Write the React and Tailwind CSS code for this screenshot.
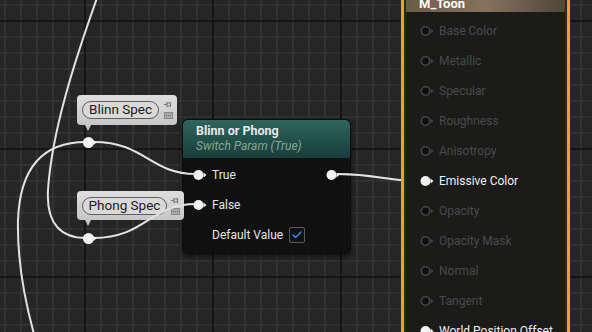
import { Check } from "lucide-react";

const matInputs = [
  { label: "Base Color" },
  { label: "Metallic" },
  { label: "Specular" },
  { label: "Roughness" },
  { label: "Anisotropy" },
  { label: "Emissive Color", active: true },
  { label: "Opacity" },
  { label: "Opacity Mask" },
  { label: "Normal" },
  { label: "Tangent" },
  { label: "World Position Offset", active: true },
];

function Pin({ active = true }) {
  return (
    <svg width="14" height="12" viewBox="0 0 14 12" className="shrink-0">
      {active ? (
        <>
          <circle cx="5.5" cy="6" r="5" fill="#f2f2f2" />
          <polygon points="10.5,3.5 13.5,6 10.5,8.5" fill="#f2f2f2" />
        </>
      ) : (
        <>
          <circle cx="5.5" cy="6" r="4.2" fill="#0e0e0e" stroke="#464646" strokeWidth="1.6" />
          <polygon points="10.8,3.8 13.5,6 10.8,8.2" fill="#464646" />
        </>
      )}
    </svg>
  );
}

function Grid() {
  return (
    <svg className="absolute inset-0" width="592" height="332">
      <defs>
        <pattern id="minor" x="4" y="4" width="16" height="16" patternUnits="userSpaceOnUse">
          <rect width="16" height="2" fill="#323232" />
          <rect width="2" height="16" fill="#323232" />
        </pattern>
        <pattern id="major" x="84" y="20" width="128" height="128" patternUnits="userSpaceOnUse">
          <rect width="128" height="2" fill="#151515" />
          <rect width="2" height="128" fill="#151515" />
        </pattern>
      </defs>
      <rect width="592" height="332" fill="#262626" />
      <rect width="592" height="332" fill="url(#minor)" />
      <rect width="592" height="332" fill="url(#major)" />
    </svg>
  );
}

function Bubble({ label, className, pillWidth }) {
  return (
    <div className={`absolute flex items-start rounded-[4px] bg-gradient-to-b from-[#dedede] to-[#c6c6c6] pl-[5px] pt-[6px] ${className}`}>
      <div
        className={`flex h-[18px] items-center justify-center rounded-full border border-[#5e5e5e] bg-[#d9d9d9] text-[13.5px] leading-none text-[#1c1c1c] ${pillWidth}`}
      >
        {label}
      </div>
      <div className="ml-auto mr-[4px] flex flex-col items-center gap-[4px]">
        <svg width="9" height="7" viewBox="0 0 9 7">
          <path d="M0 3.5h3M3 1v5M3 2h3.5v3H3M6.5 1v5" stroke="#7a7a7a" strokeWidth="1.2" fill="none" />
        </svg>
        <svg width="9" height="7" viewBox="0 0 9 7">
          <rect x="0.5" y="0.5" width="8" height="6" fill="#a9a9a9" stroke="#8a8a8a" />
          <rect x="2" y="3" width="1" height="1" fill="#666" />
          <rect x="4" y="3" width="1" height="1" fill="#666" />
          <rect x="6" y="3" width="1" height="1" fill="#666" />
        </svg>
      </div>
      <div className="absolute left-[8px] top-full h-0 w-0 border-x-[3px] border-t-[6px] border-x-transparent border-t-[#c6c6c6]" />
    </div>
  );
}

function SwitchNode() {
  return (
    <div className="absolute left-[182px] top-[119px] h-[135px] w-[169px] overflow-hidden rounded-[6px] border border-[#0b0b0b] bg-[rgba(14,15,14,0.93)] shadow-[0_2px_6px_rgba(0,0,0,0.6)]">
      <div className="h-[38px] bg-gradient-to-b from-[#2f6660] to-[#183d3a] pl-[13px] pt-[3px]">
        <p className="text-[12.5px] font-bold leading-[15px] text-[#e8e8e8]">Blinn or Phong</p>
        <p className="mt-[1px] text-[12px] italic leading-[15px] text-[#86a690]">Switch Param (True)</p>
      </div>
      <div className="pt-[2px]">
        <div className="flex h-[30px] items-center pl-[10px] text-[12px] text-[#e6e6e6]">
          <Pin />
          <span className="ml-[5px]">True</span>
          <div className="ml-auto mr-[10px]">
            <Pin />
          </div>
        </div>
        <div className="flex h-[30px] items-center pl-[10px] text-[12px] text-[#e6e6e6]">
          <Pin />
          <span className="ml-[5px]">False</span>
        </div>
        <div className="flex h-[30px] items-center pl-[29px] text-[12px] text-[#e6e6e6]">
          <span>Default Value</span>
          <div className="ml-[6px] flex h-[16px] w-[16px] items-center justify-center rounded-[2px] border border-[#5a5a5a] bg-[#101010]">
            <Check className="h-[12px] w-[12px] text-[#2b8cf0]" strokeWidth={3} />
          </div>
        </div>
      </div>
    </div>
  );
}

function MaterialNode() {
  return (
    <div className="absolute left-[401px] top-[-20px] h-[380px] w-[169px] rounded-[6px] border-[3px] border-[#f2a30f]">
      <div className="h-full rounded-[3px] border-2 border-[#2c2a1d] bg-[#1b1c1a]">
        <div className="flex h-[27px] items-end bg-gradient-to-r from-[#6a5a48] via-[#85735e] to-[#51453a] pb-[2px] pl-[13px]">
          <span className="text-[13px] font-bold leading-none text-white">M_Toon</span>
        </div>
        <div className="pt-[4px]">
          {matInputs.map(({ label, active = false }) => (
            <div key={label} className="flex h-[30px] items-center pl-[14px]">
              <Pin active={active} />
              <span
                className={`ml-[5px] whitespace-nowrap text-[12px] ${active ? "text-[#f0f0f0]" : "text-[#4a4a4a]"}`}
              >
                {label}
              </span>
            </div>
          ))}
        </div>
      </div>
    </div>
  );
}

function Wires() {
  return (
    <svg className="absolute inset-0" width="592" height="332" fill="none">
      <g stroke="#e2e2e2" strokeWidth="2" strokeLinecap="round">
        <path d="M97 -2 C 75 60, 52 130, 48 190 C 46 225, 62 238, 86 238" />
        <path d="M86 142 C 45 142, 20 165, 18 220 C 17 265, 26 305, 34 334" />
        <path d="M94 142 C 145 142, 150 174, 196 174" />
        <path d="M94 238 C 145 238, 150 204, 196 204" />
        <path d="M338 174 C 380 174, 380 181, 420 181" />
      </g>
      <g fill="#f4f4f4">
        <circle cx="88.5" cy="142.5" r="5.5" />
        <polygon points="93.5,140 96.5,142.5 93.5,145" />
        <circle cx="88.5" cy="238.5" r="5.5" />
        <polygon points="93.5,236 96.5,238.5 93.5,241" />
      </g>
    </svg>
  );
}

export default function App() {
  return (
    <div className="relative h-[332px] w-[592px] overflow-hidden bg-[#262626] font-[Roboto,sans-serif]">
      <Grid />
      <SwitchNode />
      <Bubble label="Blinn Spec" className="left-[77px] top-[95px] h-[30px] w-[100px]" pillWidth="w-[77px]" />
      <Bubble label="Phong Spec" className="left-[77px] top-[191px] h-[29px] w-[107px]" pillWidth="w-[85px]" />
      <Wires />
      <MaterialNode />
    </div>
  );
}
